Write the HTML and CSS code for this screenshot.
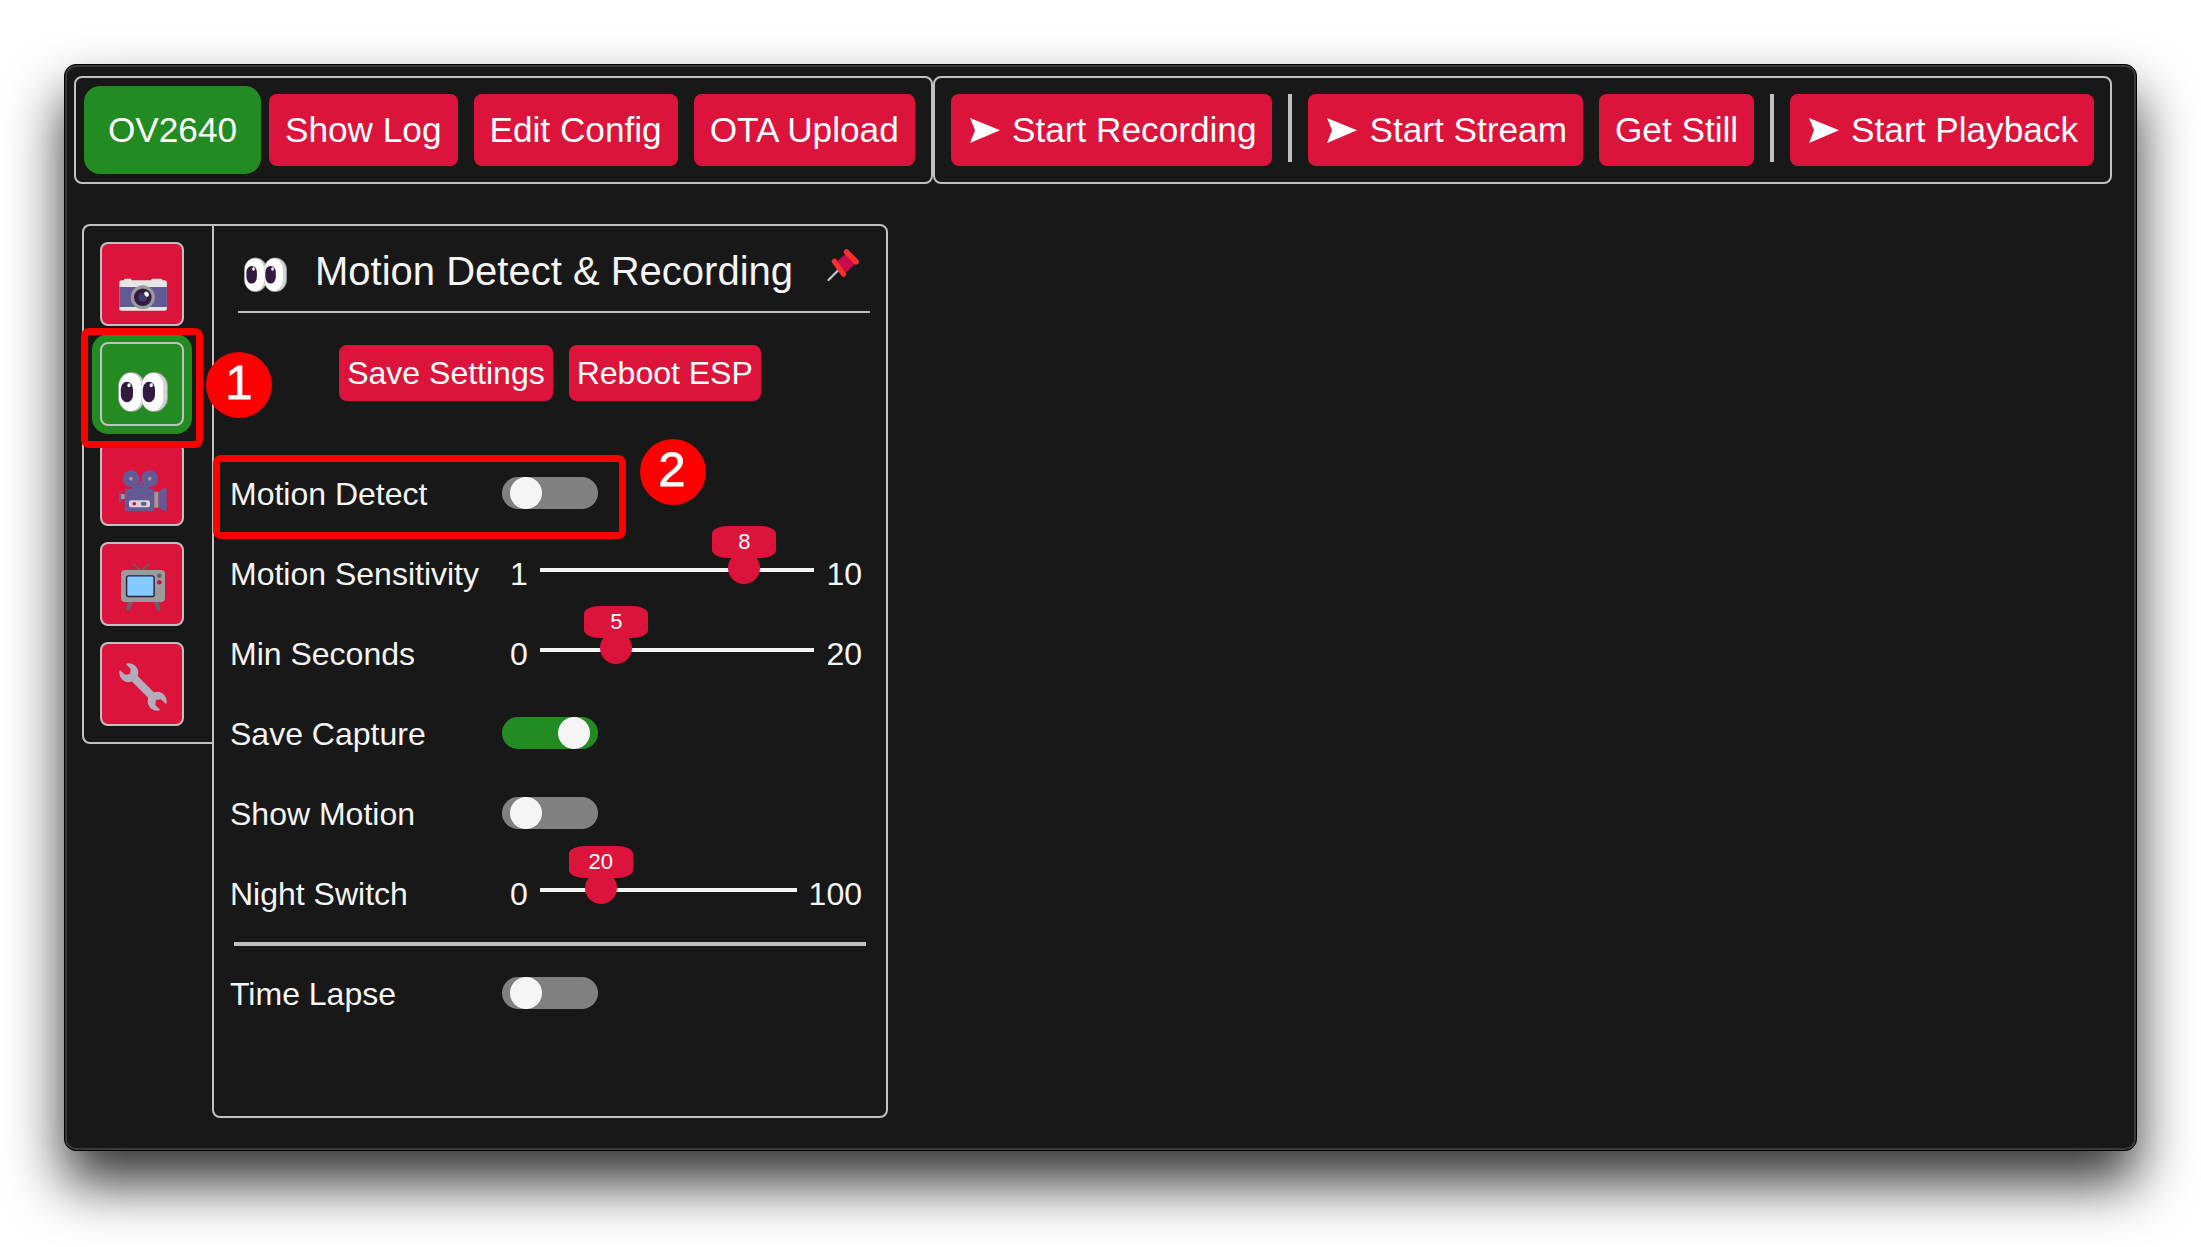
FILE: index.html
```html
<!DOCTYPE html>
<html lang="en">
<head>
<meta charset="utf-8">
<title>ESP-CAM</title>
<link rel="stylesheet" href="styles.css">
</head>
<body>
<svg class="defs" width="0" height="0" aria-hidden="true">
  <symbol id="arrow" viewBox="0 0 30 25"><path d="M0 0L30 12.3L0 25L5 12.3z" fill="#fff"/></symbol>
  <symbol id="eyes" viewBox="-1 -1 50 50">
    <g stroke="#9b9b9b">
      <rect x="22.3" y="9.5" width="26.2" height="39" rx="12.5" ry="14" fill="#d3d3d3"/>
      <rect x="-.5" y="9.5" width="26" height="39" rx="12.5" ry="14" fill="#d3d3d3"/>
    </g>
    <rect x="22.8" y="10" width="21.5" height="38" rx="10.7" ry="14" fill="#fff"/>
    <rect x="0" y="10" width="22.5" height="38" rx="11" ry="14" fill="#fff"/>
    <rect x="1.8" y="18.7" width="12.2" height="20.5" rx="6" ry="7.5" fill="#321b41"/>
    <rect x="23.8" y="18.7" width="12.2" height="20.5" rx="6" ry="7.5" fill="#321b41"/>
    <ellipse cx="10" cy="22.3" rx="1.6" ry="2" fill="#fff"/>
    <ellipse cx="32.2" cy="22.3" rx="1.6" ry="2" fill="#fff"/>
  </symbol>
</svg>

<div class="window">
  <header class="toolbar">
    <div class="group group-left">
      <button class="btn btn-active">OV2640</button>
      <button class="btn">Show Log</button>
      <button class="btn">Edit Config</button>
      <button class="btn">OTA Upload</button>
    </div>
    <div class="group group-right">
      <button class="btn"><svg class="arrow"><use href="#arrow"/></svg>Start Recording</button>
      <span class="divider"></span>
      <button class="btn"><svg class="arrow"><use href="#arrow"/></svg>Start Stream</button>
      <button class="btn">Get Still</button>
      <span class="divider"></span>
      <button class="btn"><svg class="arrow"><use href="#arrow"/></svg>Start Playback</button>
    </div>
  </header>

  <main class="content">
    <nav class="tabs">
      <button class="tab">
        <svg viewBox="-1 -1 50 50">
          <rect x="5" y="15.7" width="7.3" height="4" rx="1" fill="#e6e6e6"/>
          <rect x="32.3" y="15.7" width="10.7" height="4" rx="1" fill="#e6e6e6"/>
          <rect x=".3" y="17.3" width="47.6" height="30.4" rx="2.5" fill="#e6e6e6"/>
          <rect x=".3" y="24" width="47.6" height="20" fill="#635994"/>
          <circle cx="23.8" cy="34.3" r="12" fill="#9b9b9b"/>
          <circle cx="23.8" cy="34.3" r="8.8" fill="#321b41"/>
          <circle cx="23.8" cy="34.3" r="4.3" fill="#433b6b"/>
          <ellipse cx="27.6" cy="31.2" rx="2.1" ry="2.7" transform="rotate(-40 27.6 31.2)" fill="#fff"/>
        </svg>
      </button>
      <button class="tab tab-active"><svg><use href="#eyes"/></svg></button>
      <button class="tab">
        <svg viewBox="-1 -1 50 50">
          <g fill="#635994">
            <circle cx="12" cy="15.7" r="8.4"/><circle cx="30.7" cy="15.7" r="8.4"/>
            <path d="M15 22L20 21.3V18h3v3.300L28 22L31.500 27H11z"/>
            <rect x="5.700" y="26" width="29.600" height="22.300" rx="2.500"/>
            <path d="M0 29.300h2v10H0zM39.300 28.700L46.500 24.600Q47.700 24.300 47.700 25.500V47.500Q47.700 48.700 46.500 48.200L39.300 44.700z"/>
          </g>
          <g fill="#9b9b9b">
            <circle cx="12" cy="15.700" r="1.900"/><circle cx="30.700" cy="15.700" r="1.900"/>
            <path d="M2 31h3.700v5H2zM35.300 28.700h4v16h-4z"/>
          </g>
          <rect x="10" y="37.300" width="21" height="7" rx="2" fill="#d3d3d3"/>
          <circle cx="15.300" cy="40.800" r="1.800" fill="#ca0b4a"/>
          <ellipse cx="24.700" cy="40.800" rx="2.800" ry="2" fill="#635994"/>
        </svg>
      </button>
      <button class="tab">
        <svg viewBox="-1 -1 50 50">
          <path d="M14.500 1.300L22 8L30 1.300" fill="none" stroke="#636363" stroke-width="1.700" stroke-linecap="round"/>
          <path d="M9 38h5.500L11 46.500Q10 48 8 47.500Q6.500 47 7.200 45zM39.500 38H34l3.500 8.500Q38.500 48 40.300 47.500Q42 47 41.300 45z" fill="#636363"/>
          <rect x="2" y="7" width="44" height="32" rx="4" fill="#9b9b9b"/>
          <rect x="7.600" y="12.900" width="27.500" height="20.600" rx="2" fill="#83cbff" stroke="#321b41" stroke-width="1.400"/>
          <circle cx="40.300" cy="12.700" r="2.300" fill="#636363"/><circle cx="40.300" cy="19.300" r="2.300" fill="#ca0b4a"/>
        </svg>
      </button>
      <button class="tab">
        <svg viewBox="-1 -1 50 50">
          <path d="M12 12L36 36" stroke="#b4acbc" stroke-width="8"/>
          <path id="jaw" d="M7.200 1.600Q6.800 .6 8 .4A9.500 9.500 0 1 1 .4 8.300Q.6 7 1.600 7.500L6 11.700L11 11L11.700 6z" fill="#b4acbc"/>
          <use href="#jaw" transform="rotate(180 24 24)"/>
        </svg>
      </button>
    </nav>

    <section class="panel">
      <div class="panel-head">
        <svg class="head-eyes"><use href="#eyes"/></svg>
        <h1>Motion Detect &amp; Recording</h1>
        <svg class="pin" viewBox="0 0 33 32">
          <path d="M1.500 31L14 18.500" stroke="#cdc4d6" stroke-width="2.200" stroke-linecap="round"/>
          <path d="M20 4L29.500 13.500L19 23.500L10 12z" fill="#ca0b4a"/>
          <path d="M7.500 12.500L16.500 25M19.500 3L29.200 12.700" stroke="#f92f2f" stroke-width="5.500" stroke-linecap="round"/>
        </svg>
      </div>
      <div class="actions">
        <button class="btn btn-small">Save Settings</button>
        <button class="btn btn-small">Reboot ESP</button>
      </div>

      <div class="row"><span class="label">Motion Detect</span><span class="toggle"></span></div>
      <div class="row"><span class="label">Motion Sensitivity</span>
        <div class="range"><span>1</span><div class="track" style="--pos:.7778"><i class="knob"></i><b class="bubble">8</b></div><span>10</span></div>
      </div>
      <div class="row"><span class="label">Min Seconds</span>
        <div class="range"><span>0</span><div class="track" style="--pos:.25"><i class="knob"></i><b class="bubble">5</b></div><span>20</span></div>
      </div>
      <div class="row"><span class="label">Save Capture</span><span class="toggle toggle-on"></span></div>
      <div class="row"><span class="label">Show Motion</span><span class="toggle"></span></div>
      <div class="row"><span class="label">Night Switch</span>
        <div class="range"><span>0</span><div class="track" style="--pos:.2"><i class="knob"></i><b class="bubble">20</b></div><span>100</span></div>
      </div>
      <hr>
      <div class="row"><span class="label">Time Lapse</span><span class="toggle"></span></div>
    </section>
  </main>
</div>

<div class="mark mark-tab"></div>
<div class="mark mark-row"></div>
<div class="step step-one">1</div>
<div class="step step-two">2</div>
</body>
</html>
```
FILE: styles.css
```css
* { box-sizing: border-box; }

body {
  margin: 0;
  padding: 64px;
  height: 1247px;
  overflow: hidden;
  background: #fff;
  font-family: "Liberation Sans", Arial, sans-serif;
  color: #f5f5f5;
}

.defs { position: absolute; }

.window {
  width: 2073px;
  height: 1087px;
  padding: 11px 9px;
  border: 1px solid #000;
  border-radius: 12px;
  background: #181818;
  box-shadow: inset 0 0 0 2px #3a3a3a, 0 32px 56px rgba(0, 0, 0, .8);
}

/* top toolbar */
.toolbar { display: flex; }

.group {
  display: flex;
  height: 108px;
  align-items: center;
  padding: 0 16px;
  gap: 16px;
  border: 2px solid #c0c0c0;
  border-radius: 8px;
}
.group-left { width: 859px; padding-left: 8px; }
.group-right { width: 1179px; }

.btn {
  display: flex;
  align-items: center;
  justify-content: center;
  flex: none;
  height: 72px;
  padding: 0 16px;
  border: 0;
  border-radius: 8px;
  background: #dc143c;
  color: #fff;
  font: 35.2px/40px "Liberation Sans", Arial, sans-serif;
  white-space: nowrap;
}
.btn-active {
  width: 177px;
  height: 88px;
  margin-right: -8px;
  border-radius: 16px;
  background: #228b22;
}
.btn-small { height: 56px; padding: 0 8px; font-size: 32px; }

.arrow { width: 30px; height: 25px; margin: 0 12.500px 0 2.500px; }

.divider { width: 4px; height: 68px; margin-bottom: 4px; background: #c0c0c0; }

/* tab strip and settings panel */
.content { display: flex; align-items: flex-start; padding: 40px 0 0 8px; }

.tabs {
  display: flex;
  flex-direction: column;
  gap: 16px;
  width: 130px;
  height: 520px;
  padding: 16px;
  border: 2px solid #c0c0c0;
  border-right: 0;
  border-radius: 8px 0 0 8px;
}
.tab {
  display: flex;
  align-items: flex-start;
  width: 84px;
  height: 84px;
  padding: 18px 0 0 16px;
  border: 2px solid #c0c0c0;
  border-radius: 8px;
  background: #dc143c;
}
.tab svg { flex: none; width: 50px; height: 50px; }
.tab-active { background: #228b22; box-shadow: 0 0 0 8px #228b22; }

.panel {
  width: 676px;
  height: 894px;
  padding: 0 16px;
  border: 2px solid #c0c0c0;
  border-radius: 0 8px 8px 8px;
}
.panel-head {
  display: flex;
  align-items: center;
  width: 632px;
  height: 87px;
  margin-left: 8px;
  padding: 4px 10px 0 6px;
  border-bottom: 2px solid #c0c0c0;
}
.panel-head h1 { flex: 1; margin: 1px 0 0 28px; font-size: 40px; font-weight: 400; line-height: 46px; }
.head-eyes { width: 43px; height: 43px; }
.pin { width: 33px; height: 32px; margin-bottom: 11px; }

.actions { display: flex; justify-content: center; gap: 16px; padding: 32px 0 53px; }

.row { display: flex; align-items: center; height: 80px; font-size: 32px; line-height: 36px; }
.label { width: 272px; flex: none; }

.toggle {
  width: 96px;
  height: 32px;
  margin-bottom: 2px;
  border-radius: 16px;
  background: radial-gradient(circle at 24px 16px, #f5f5f5 15.500px, #808080 16.500px);
}
.toggle-on { background: radial-gradient(circle at 72px 16px, #f5f5f5 15.500px, #228b22 16.500px); }

.range { display: flex; align-items: center; gap: 12px; width: 360px; padding-left: 8px; }
.track {
  --center: calc(16px + (100% - 32px) * var(--pos));
  position: relative;
  flex: 1;
  height: 4px;
  margin-bottom: 8px;
  background: #f5f5f5;
}
.knob {
  position: absolute;
  top: -16px;
  left: calc(var(--center) - 16px);
  width: 32px;
  height: 32px;
  border-radius: 50%;
  background: #dc143c;
}
.bubble {
  position: absolute;
  top: -42px;
  left: calc(var(--center) - 32px);
  width: 64px;
  height: 32px;
  border-radius: 16px / 8px;
  background: #dc143c;
  color: #fff;
  font-size: 22px;
  font-weight: 400;
  line-height: 31px;
  text-align: center;
}

hr { height: 4px; margin: 8px 4px; border: 0; background: #c0c0c0; }

/* tutorial callouts laid over the window */
.mark { position: absolute; border: 7px solid #f00; border-radius: 8px; }
.mark-tab { left: 81px; top: 328px; width: 122px; height: 120px; }
.mark-row { left: 213px; top: 455px; width: 413px; height: 84px; }

.step {
  position: absolute;
  width: 66px;
  height: 66px;
  border-radius: 50%;
  background: #f00;
  color: #fff;
  font-size: 49px;
  line-height: 61px;
  text-align: center;
  -webkit-text-stroke: .8px #fff;
}
.step-one { left: 206px; top: 352px; }
.step-two { left: 640px; top: 439px; padding-right: 2px; }
```
